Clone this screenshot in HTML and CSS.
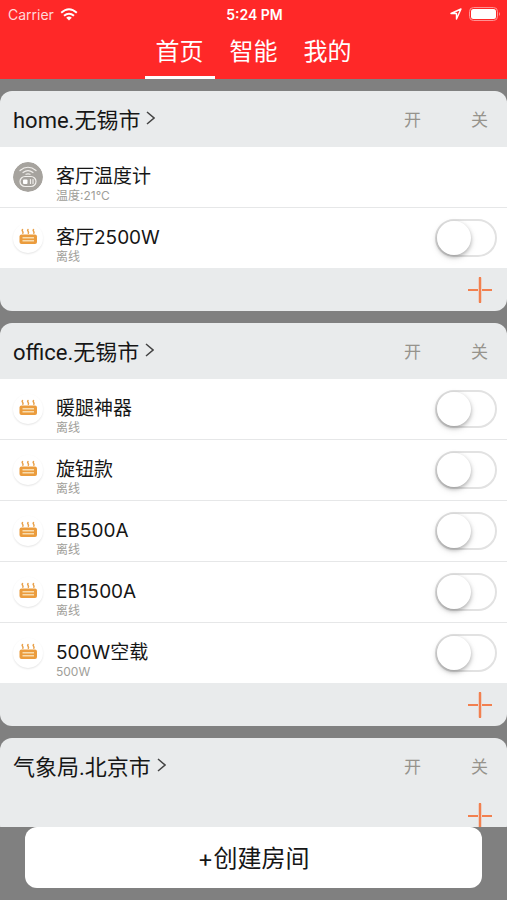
FILE: index.html
```html
<!DOCTYPE html>
<html lang="zh-CN">
<head>
<meta charset="utf-8">
<meta name="viewport" content="width=device-width, initial-scale=1">
<title>首页</title>
<link rel="stylesheet" href="styles.css">
</head>
<body>
<svg class="sprite" aria-hidden="true">
  <symbol id="heater" viewBox="0 0 30 30">
    <g fill="none" stroke="#e9a24c" stroke-width="1.5" stroke-linecap="round">
      <path d="M9.500 6.500c-1.500 1.500 1.500 2 .3 3.700M15 6.500c-1.500 1.500 1.500 2 .3 3.700M20.500 6.500c-1.500 1.500 1.500 2 .3 3.700"/>
    </g>
    <rect x="6.500" y="11.500" width="17.500" height="9.500" rx="2" fill="#eb9c3d"/>
    <path d="M9.500 14.700h11.500M9.500 17.700h11.500" stroke="#f8dcae" stroke-width="1.500"/>
  </symbol>
  <symbol id="sensor" viewBox="0 0 30 30">
    <circle cx="15" cy="15" r="15" fill="#a6a39e"/>
    <g fill="none" stroke="#f1efec" stroke-width="1.200" stroke-linecap="round">
      <path d="M7 8.500q8-6.500 16 0M10 10.500q5-3.800 10 0M13 12.300q2-1 4 0"/>
      <rect x="7" y="14.500" width="16" height="10" rx="5"/>
      <path d="M17.500 17.500v4M20 17.500v4"/>
    </g>
    <rect x="10" y="17.500" width="4.500" height="4.500" rx="1" fill="#fff"/>
  </symbol>
  <symbol id="chevron" viewBox="0 0 9 16"><path d="M1 2l7 6-7 6" fill="none" stroke="#444" stroke-width="1.500"/></symbol>
  <symbol id="plus" viewBox="0 0 26 26"><path d="M1 13h10M15 13h10" stroke="#f2804f" stroke-width="2"/><path d="M13 1v24" stroke="#f2804f" stroke-width="2.500" stroke-linecap="round"/></symbol>
</svg>
<div class="app">
  <header class="top">
    <div class="status">
      <span class="carrier">Carrier
        <svg width="18" height="13" viewBox="0 0 18 13" aria-hidden="true"><g fill="none" stroke="#fff" stroke-width="2"><path d="M1.200 4.800q7.800-7 15.600 0M4 7.800q5-4.200 10 0"/></g><path d="M6.200 9.700q2.800-2.200 5.600 0L9 12.600z" fill="#fff"/></svg>
      </span>
      <span class="clock">5:24 PM</span>
      <span class="indicators">
        <svg width="12" height="12" viewBox="0 0 12 12" aria-hidden="true"><path d="M1 5.500L11 1 6.500 11V5.500z" fill="none" stroke="#fff" stroke-width="1.400" stroke-linejoin="round"/></svg>
        <svg width="32" height="14" viewBox="0 0 32 14" aria-hidden="true"><rect x=".5" y=".5" width="28" height="13" rx="4" fill="none" stroke="#ff9292"/><rect x="2" y="2" width="25" height="10" rx="2.500" fill="#fff"/><path d="M30 5q2 2 0 4z" fill="#ff9292"/></svg>
      </span>
    </div>
    <nav class="tabs">
      <a class="tab active" href="#home" aria-current="page">首页</a>
      <a class="tab" href="#smart">智能</a>
      <a class="tab" href="#me">我的</a>
    </nav>
  </header>

  <main class="rooms">
    <section class="room">
      <div class="room-head">
        <a class="room-name" href="#r1">home.无锡市<svg width="9" height="16" aria-hidden="true"><use href="#chevron"/></svg></a>
        <button class="all" type="button">开</button><button class="all" type="button">关</button>
      </div>
      <ul class="devices">
        <li class="device"><svg class="icon" aria-hidden="true"><use href="#sensor"/></svg><div class="info"><span class="name">客厅温度计</span><span class="state">温度:21°C</span></div></li>
        <li class="device"><svg class="icon raised" aria-hidden="true"><use href="#heater"/></svg><label class="info" for="d1"><span class="name">客厅2500W</span><span class="state">离线</span></label><input class="switch" type="checkbox" role="switch" id="d1"></li>
      </ul>
      <div class="room-foot"><button class="add" type="button" aria-label="添加"><svg width="26" height="26" aria-hidden="true"><use href="#plus"/></svg></button></div>
    </section>

    <section class="room">
      <div class="room-head">
        <a class="room-name" href="#r2">office.无锡市<svg width="9" height="16" aria-hidden="true"><use href="#chevron"/></svg></a>
        <button class="all" type="button">开</button><button class="all" type="button">关</button>
      </div>
      <ul class="devices">
        <li class="device"><svg class="icon raised" aria-hidden="true"><use href="#heater"/></svg><label class="info" for="d2"><span class="name">暖腿神器</span><span class="state">离线</span></label><input class="switch" type="checkbox" role="switch" id="d2"></li>
        <li class="device"><svg class="icon raised" aria-hidden="true"><use href="#heater"/></svg><label class="info" for="d3"><span class="name">旋钮款</span><span class="state">离线</span></label><input class="switch" type="checkbox" role="switch" id="d3"></li>
        <li class="device"><svg class="icon raised" aria-hidden="true"><use href="#heater"/></svg><label class="info" for="d4"><span class="name">EB500A</span><span class="state">离线</span></label><input class="switch" type="checkbox" role="switch" id="d4"></li>
        <li class="device"><svg class="icon raised" aria-hidden="true"><use href="#heater"/></svg><label class="info" for="d5"><span class="name">EB1500A</span><span class="state">离线</span></label><input class="switch" type="checkbox" role="switch" id="d5"></li>
        <li class="device"><svg class="icon raised" aria-hidden="true"><use href="#heater"/></svg><label class="info" for="d6"><span class="name">500W空载</span><span class="state">500W</span></label><input class="switch" type="checkbox" role="switch" id="d6"></li>
      </ul>
      <div class="room-foot"><button class="add" type="button" aria-label="添加"><svg width="26" height="26" aria-hidden="true"><use href="#plus"/></svg></button></div>
    </section>

    <section class="room">
      <div class="room-head">
        <a class="room-name" href="#r3">气象局.北京市<svg width="9" height="16" aria-hidden="true"><use href="#chevron"/></svg></a>
        <button class="all" type="button">开</button><button class="all" type="button">关</button>
      </div>
      <div class="room-foot"><button class="add" type="button" aria-label="添加"><svg width="26" height="26" aria-hidden="true"><use href="#plus"/></svg></button></div>
    </section>
  </main>

  <footer class="bottom"><button class="create" type="button">+创建房间</button></footer>
</div>
</body>
</html>
```
FILE: styles.css
```css
* { box-sizing: border-box; }

body {
  margin: 0;
  background: #808080;
  color: #161616;
  font-family: Inter, "Noto Sans CJK SC", sans-serif;
}

button {
  padding: 0;
  border: 0;
  background: none;
  color: inherit;
  font: inherit;
  cursor: pointer;
}

a { color: inherit; text-decoration: none; }
.sprite { position: absolute; width: 0; height: 0; }

.app {
  display: flex;
  flex-direction: column;
  height: 100vh;
}

.top { background: #ff2828; color: #fff; }

.status {
  display: grid;
  grid-template-columns: 1fr auto 1fr;
  align-items: center;
  height: 28px;
  padding: 0 6px 0 8px;
  font-size: 14px;
}

.carrier { display: flex; align-items: center; gap: 6px; color: #ffd9d9; }
.clock { font-weight: 600; }
.indicators { display: flex; align-items: center; justify-content: flex-end; gap: 7px; }

.tabs { display: flex; justify-content: center; gap: 4px; }

.tab {
  height: 51px;
  padding: 0 11px;
  border-bottom: 3px solid transparent;
  font-size: 24px;
  line-height: 48px;
}

.tab.active { border-bottom-color: #fff; }

.rooms {
  display: flex;
  flex: 1;
  flex-direction: column;
  gap: 12px;
  min-height: 0;
  padding-top: 12px;
  overflow: hidden;
}

.room {
  flex: none;
  border-radius: 12px;
  background: #e9ebec;
  overflow: hidden;
}

.room-head {
  display: flex;
  align-items: center;
  gap: 50px;
  height: 56px;
  padding: 0 19px 2px 13px;
}

.room-name {
  display: flex;
  flex: 1;
  align-items: center;
  gap: 6px;
  font-family: Roboto, "Noto Sans CJK SC", sans-serif;
  font-size: 22px;
}

.all { color: #96938c; font-size: 17px; }

.devices {
  margin: 0;
  padding: 0;
  background: #fff;
  list-style: none;
}

.device {
  display: flex;
  align-items: center;
  height: 61px;
  padding: 0 10px 0 13px;
  border-bottom: 1px solid #e6e7e8;
}

.device:last-child { height: 60px; border-bottom: 0; }

.icon {
  flex: none;
  width: 30px;
  height: 30px;
  border-radius: 50%;
}

.raised { box-shadow: 0 1px 2px #e4e4e4; }

.info {
  display: flex;
  flex: 1;
  flex-direction: column;
  padding: 12px 0 0 13px;
}

.name { font-size: 19px; line-height: 26px; }
.state { color: #a09e99; font-size: 12px; line-height: 12px; }

.switch {
  flex: none;
  width: 62px;
  height: 38px;
  margin: 0;
  border: 2px solid #e2e2e2;
  border-radius: 19px;
  background: #fff;
  appearance: none;
}

.switch::before {
  display: block;
  width: 34px;
  height: 34px;
  border-radius: 50%;
  background: #fff;
  box-shadow: 0 2px 4px #00000048, 0 3px 8px #00000014;
  content: "";
}

.switch:checked { background: #ff2828; }
.switch:checked::before { margin-left: auto; }

.room-foot {
  display: flex;
  align-items: center;
  justify-content: flex-end;
  height: 43px;
  padding: 0 14px;
}

.add { display: flex; }

.bottom { display: flex; padding: 0 25px 12px; }

.create {
  flex: 1;
  height: 61px;
  padding-bottom: 2px;
  border-radius: 12px;
  background: #fff;
  font-size: 24px;
}
```
